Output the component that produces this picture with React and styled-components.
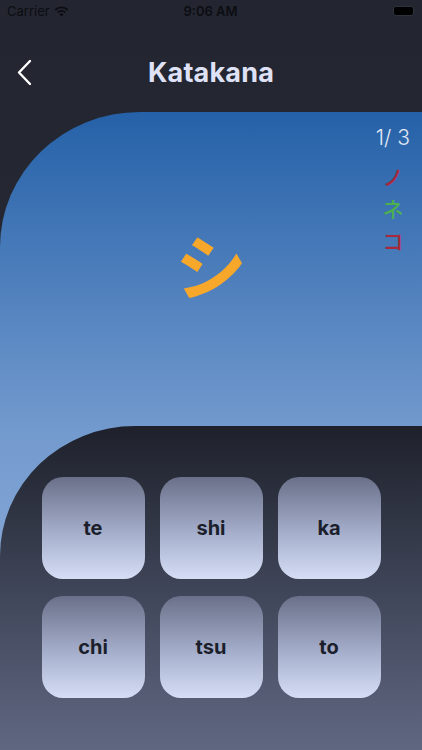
import styled, { createGlobalStyle } from 'styled-components'

const GlobalStyle = createGlobalStyle`
  html, body {
    margin: 0;
    padding: 0;
    background: #22252f;
  }
  * {
    box-sizing: border-box;
  }
`

const Page = styled.div`
  width: 422px;
  height: 750px;
  display: flex;
  flex-direction: column;
  overflow: hidden;
  background: linear-gradient(180deg, #232631 0%, #272b36 100%);
  font-family: 'Inter', 'Liberation Sans', sans-serif;
`

const StatusBar = styled.div`
  height: 22px;
  display: grid;
  grid-template-columns: 1fr auto 1fr;
  align-items: center;
  padding: 0 8px 0 7px;
  font-size: 13px;
  color: #0c0d11;
`

const Carrier = styled.div`
  display: flex;
  align-items: center;
  gap: 4px;
  font-weight: 400;
`

const Clock = styled.div`
  font-weight: 600;
`

const Battery = styled.div`
  justify-self: end;
  width: 21px;
  height: 10px;
  border-radius: 3px;
  background: #000;
  border: 1px solid #2e323c;
`

const NavBar = styled.div`
  height: 90px;
  display: grid;
  grid-template-columns: 60px 1fr 60px;
  align-items: center;
  padding-top: 10px;
`

const BackButton = styled.button`
  background: none;
  border: none;
  padding: 0 0 0 16px;
  height: 30px;
  display: flex;
  align-items: center;
  cursor: pointer;
`

const Title = styled.h1`
  margin: 0;
  text-align: center;
  font-size: 27px;
  font-weight: 700;
  color: #dfe2f6;
  letter-spacing: 0.2px;
`

const Card = styled.div`
  flex: 1;
  display: flex;
  flex-direction: column;
  border-top-left-radius: 140px 135px;
  background: linear-gradient(180deg, #2561a8 0%, #739ace 50%, #9cb6de 100%);
`

const Stage = styled.div`
  height: 314px;
  display: grid;
  grid-template-columns: 1fr auto 1fr;
  padding-top: 13px;
`

const Kana = styled.div`
  grid-column: 2;
  align-self: center;
  margin-top: -26px;
  font-family: 'Noto Sans CJK JP', sans-serif;
  font-size: 72px;
  font-weight: 700;
  color: #f7a72a;
  line-height: 1;
`

const Side = styled.div`
  grid-column: 3;
  justify-self: end;
  align-self: start;
  padding-right: 12px;
  display: flex;
  flex-direction: column;
  align-items: center;
`

const Counter = styled.div`
  font-size: 21px;
  font-weight: 300;
  color: #e2e8f4;
  line-height: 26px;
  margin-bottom: 9px;
`

const Choice = styled.div`
  font-family: 'Noto Sans CJK JP', sans-serif;
  font-size: 21px;
  font-weight: 500;
  line-height: 32px;
  color: ${(p) => p.color};
`

const Panel = styled.div`
  flex: 1;
  border-top-left-radius: 135px 130px;
  background: linear-gradient(180deg, #1e212b 0%, #3f4558 50%, #606781 100%);
  padding-top: 51px;
  display: flex;
  justify-content: center;
`

const Grid = styled.div`
  display: grid;
  grid-template-columns: repeat(3, 103px);
  grid-auto-rows: 102px;
  column-gap: 15px;
  row-gap: 17px;
  align-content: start;
`

const AnswerButton = styled.button`
  border: none;
  border-radius: 21px;
  background: linear-gradient(180deg, #6a7089 0%, #a5aecb 55%, #d6def6 100%);
  font-family: 'Inter', 'Liberation Sans', sans-serif;
  font-size: 20px;
  font-weight: 700;
  color: #1b1f2c;
  cursor: pointer;
`

const answers = ['te', 'shi', 'ka', 'chi', 'tsu', 'to']

export default function App() {
  return (
    <Page>
      <GlobalStyle />
      <StatusBar>
        <Carrier>
          Carrier
          <svg width="15" height="11" viewBox="0 0 15 11">
            <path d="M7.5 10.5 L5.3 8.2 A3.2 3.2 0 0 1 9.7 8.2 Z" fill="#0c0d11" />
            <path d="M3.6 6.5 A5.6 5.6 0 0 1 11.4 6.5" stroke="#0c0d11" strokeWidth="1.8" fill="none" />
            <path d="M1.2 4 A9 9 0 0 1 13.8 4" stroke="#0c0d11" strokeWidth="1.8" fill="none" />
          </svg>
        </Carrier>
        <Clock>9:06 AM</Clock>
        <Battery />
      </StatusBar>
      <NavBar>
        <BackButton>
          <svg width="16" height="27" viewBox="0 0 16 27">
            <path d="M14 2 L3 13.5 L14 25" stroke="#ffffff" strokeWidth="2.4" fill="none" strokeLinecap="round" strokeLinejoin="round" />
          </svg>
        </BackButton>
        <Title>Katakana</Title>
        <div />
      </NavBar>
      <Card>
        <Stage>
          <Kana>シ</Kana>
          <Side>
            <Counter>1/ 3</Counter>
            <Choice color="#a8283c">ノ</Choice>
            <Choice color="#4caf50">ネ</Choice>
            <Choice color="#a8283c">コ</Choice>
          </Side>
        </Stage>
        <Panel>
          <Grid>
            {answers.map((a) => (
              <AnswerButton key={a}>{a}</AnswerButton>
            ))}
          </Grid>
        </Panel>
      </Card>
    </Page>
  )
}
